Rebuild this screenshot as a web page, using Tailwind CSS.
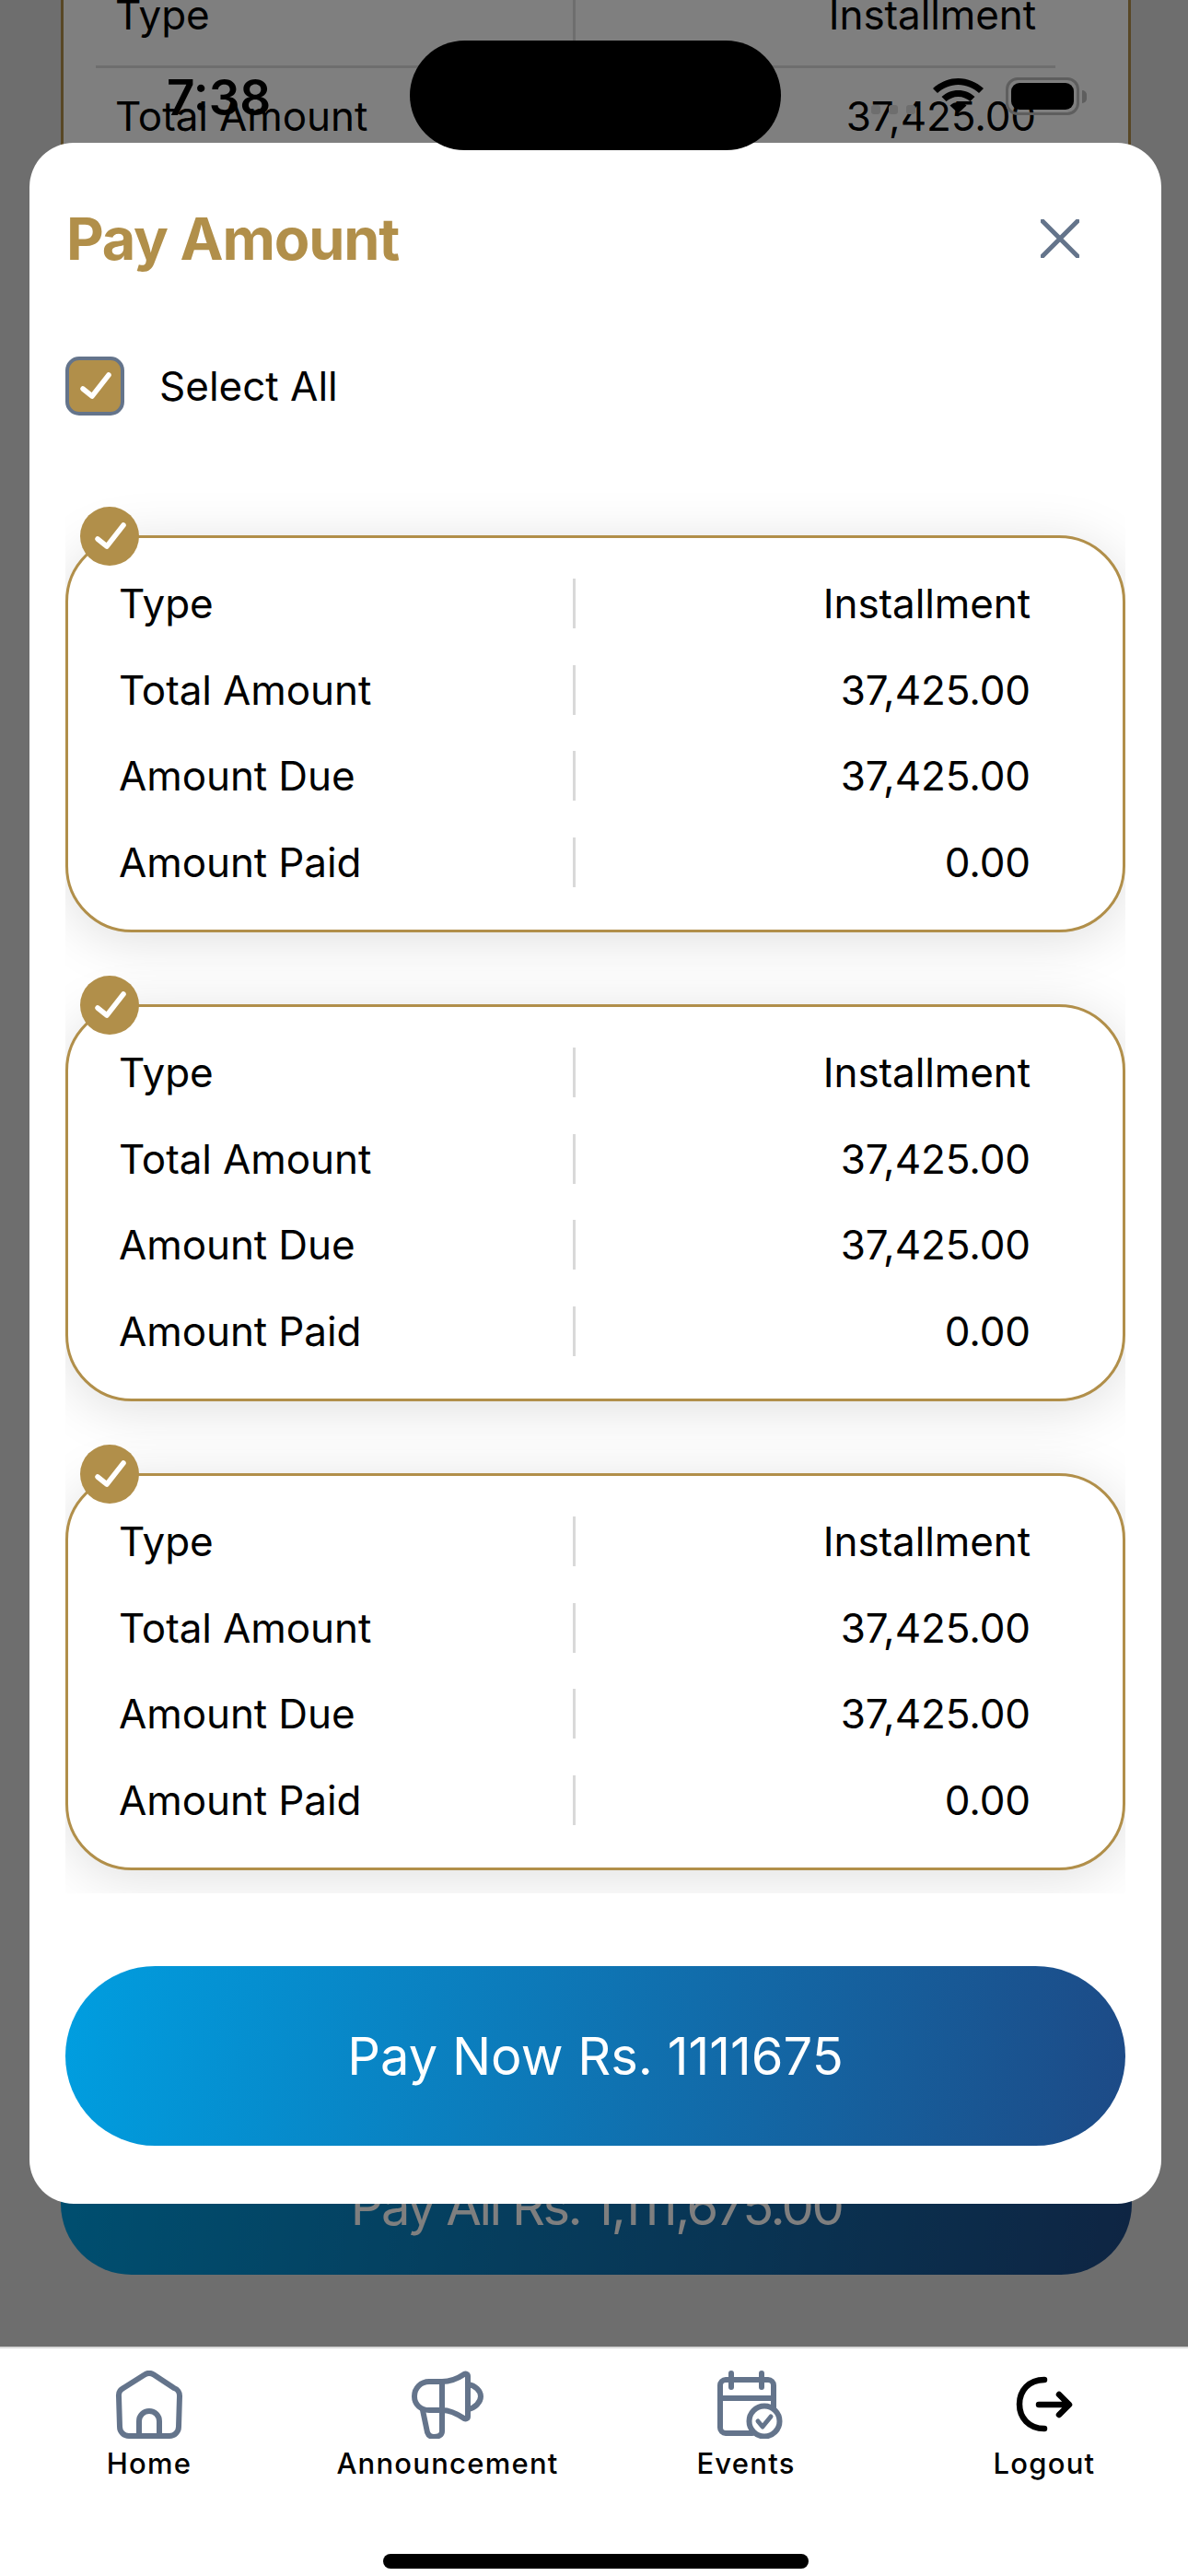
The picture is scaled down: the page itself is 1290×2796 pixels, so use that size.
<!DOCTYPE html>
<html lang="en">
<head>
    <meta charset="UTF-8">
    <meta name="viewport" content="width=device-width, initial-scale=1.0">
    <title>Pay Amount</title>
    <script src="https://cdn.jsdelivr.net/npm/@tailwindcss/browser@4"></script>
</head>
<body class="bg-white font-['Inter',sans-serif] text-black">
<div class="relative w-[1290px] h-[2796px] overflow-hidden flex flex-col">

    <!-- Page behind the modal -->
    <main class="relative h-[2547px] bg-[#dcdcdc] overflow-hidden">
        <div class="ml-[66px] mr-[62px] -mt-[20px] h-[300px] bg-white border-x-[3px] border-[#b18f4a] pl-[56px] pr-[100px] pt-[6px] text-[44px] leading-[60px] tracking-[-0.1px]">
            <div class="grid grid-cols-[497px_1fr] h-[88px] border-b-[3px] border-[#dcdcdc] -mx-[21px] px-[21px]">
                <span>Type</span><span class="border-l-[3px] border-[#dcdcdc] text-right">Installment</span>
            </div>
            <div class="flex justify-between pt-[22px]">
                <span>Total Amount</span><span>37,425.00</span>
            </div>
        </div>
        <div class="mt-[2035px] ml-[66px] mr-[61px] h-[154px] pt-[6px] rounded-full bg-[linear-gradient(97deg,#009ee0,#1d4a86)] flex items-center justify-center text-white text-[56px] tracking-[-2.5px]">Pay All Rs. 1,111,675.00</div>

        <!-- Overlay + modal -->
        <div class="absolute inset-0 bg-black/50 pt-[155px] pl-[32px]">
            <div class="w-[1229px] h-[2237px] bg-white rounded-[48px] px-[39px] pt-[68px] flex flex-col">
                <div class="flex items-center justify-between pl-[1px] pr-[50px]">
                    <h1 class="text-[63px] leading-[72px] font-bold tracking-[-1.2px] text-[#b18f4a]">Pay Amount</h1>
                    <svg class="w-[42px] h-[42px] text-[#64748b]" viewBox="0 0 42 42" fill="none" stroke="currentColor" stroke-width="5" stroke-linecap="round"><path d="M2 2 40 40M40 2 2 40"/></svg>
                </div>
                <div class="flex items-center mt-[92px] gap-[38px]">
                    <div class="w-[64px] h-[64px] rounded-[15px] border-[4px] border-[#64748b] bg-[#b18f4a] flex items-center justify-center">
                        <svg class="w-[36px] h-[30px]" viewBox="0 0 36 30" fill="none" stroke="#fff" stroke-width="5.500" stroke-linecap="round" stroke-linejoin="round"><path d="M5 18 15 26 33 3"/></svg>
                    </div>
                    <span class="text-[44px] leading-[60px]">Select All</span>
                </div>

                <div class="mt-[58px] h-[1546px] overflow-hidden pt-[72px] flex flex-col gap-[78px]">
                    <div class="relative shrink-0 h-[431px] rounded-[72px] border-[3px] border-[#b18f4a] bg-white shadow-[0_8px_60px_rgba(0,0,0,0.13)] pl-[55px] pr-[100px] pt-[44px] text-[44px] leading-[54px] tracking-[-0.1px]">
                        <span class="absolute left-[13px] -top-[34px] w-[64px] h-[64px] rounded-full bg-[#b18f4a] flex items-center justify-center">
                            <svg class="w-[36px] h-[30px]" viewBox="0 0 36 30" fill="none" stroke="#fff" stroke-width="5.500" stroke-linecap="round" stroke-linejoin="round"><path d="M5 18 15 26 33 3"/></svg>
                        </span>
                        <div class="grid grid-cols-[493px_1fr] gap-y-[39.5px]">
                            <span>Type</span><span class="border-l-[3px] border-[#d9d9d9] text-right">Installment</span>
                            <span>Total Amount</span><span class="border-l-[3px] border-[#d9d9d9] text-right">37,425.00</span>
                            <span>Amount Due</span><span class="border-l-[3px] border-[#d9d9d9] text-right">37,425.00</span>
                            <span>Amount Paid</span><span class="border-l-[3px] border-[#d9d9d9] text-right">0.00</span>
                        </div>
                    </div>
                    <div class="relative shrink-0 h-[431px] rounded-[72px] border-[3px] border-[#b18f4a] bg-white shadow-[0_8px_60px_rgba(0,0,0,0.13)] pl-[55px] pr-[100px] pt-[44px] text-[44px] leading-[54px] tracking-[-0.1px]">
                        <span class="absolute left-[13px] -top-[34px] w-[64px] h-[64px] rounded-full bg-[#b18f4a] flex items-center justify-center">
                            <svg class="w-[36px] h-[30px]" viewBox="0 0 36 30" fill="none" stroke="#fff" stroke-width="5.500" stroke-linecap="round" stroke-linejoin="round"><path d="M5 18 15 26 33 3"/></svg>
                        </span>
                        <div class="grid grid-cols-[493px_1fr] gap-y-[39.5px]">
                            <span>Type</span><span class="border-l-[3px] border-[#d9d9d9] text-right">Installment</span>
                            <span>Total Amount</span><span class="border-l-[3px] border-[#d9d9d9] text-right">37,425.00</span>
                            <span>Amount Due</span><span class="border-l-[3px] border-[#d9d9d9] text-right">37,425.00</span>
                            <span>Amount Paid</span><span class="border-l-[3px] border-[#d9d9d9] text-right">0.00</span>
                        </div>
                    </div>
                    <div class="relative shrink-0 h-[431px] rounded-[72px] border-[3px] border-[#b18f4a] bg-white shadow-[0_8px_60px_rgba(0,0,0,0.13)] pl-[55px] pr-[100px] pt-[44px] text-[44px] leading-[54px] tracking-[-0.1px]">
                        <span class="absolute left-[13px] -top-[34px] w-[64px] h-[64px] rounded-full bg-[#b18f4a] flex items-center justify-center">
                            <svg class="w-[36px] h-[30px]" viewBox="0 0 36 30" fill="none" stroke="#fff" stroke-width="5.500" stroke-linecap="round" stroke-linejoin="round"><path d="M5 18 15 26 33 3"/></svg>
                        </span>
                        <div class="grid grid-cols-[493px_1fr] gap-y-[39.5px]">
                            <span>Type</span><span class="border-l-[3px] border-[#d9d9d9] text-right">Installment</span>
                            <span>Total Amount</span><span class="border-l-[3px] border-[#d9d9d9] text-right">37,425.00</span>
                            <span>Amount Due</span><span class="border-l-[3px] border-[#d9d9d9] text-right">37,425.00</span>
                            <span>Amount Paid</span><span class="border-l-[3px] border-[#d9d9d9] text-right">0.00</span>
                        </div>
                    </div>
                </div>

                <button class="mt-[79px] h-[195px] rounded-full bg-[linear-gradient(97deg,#009ee0,#1d4a86)] text-white text-[56px]">Pay Now Rs. 1111675</button>
            </div>
        </div>
    </main>

    <!-- Status bar -->
    <div class="absolute left-[181px] top-[76px] text-[53px] leading-[60px] font-semibold">7:38</div>
    <div class="absolute left-[445px] top-[44px] w-[403px] h-[119px] rounded-[60px] bg-black"></div>
    <div class="absolute left-[946px] top-[114px] flex gap-[9px]">
        <span class="w-[10px] h-[10px] rounded-[3px] bg-[#6e6e6e]"></span>
        <span class="w-[10px] h-[10px] rounded-[3px] bg-[#6e6e6e]"></span>
        <span class="w-[10px] h-[10px] rounded-[3px] bg-[#6e6e6e]"></span>
    </div>
    <svg class="absolute left-[1013px] top-[85px] w-[55px] h-[38px]" viewBox="0 0 55 38" fill="#000"><path d="M27.5 0C17 0 8 4 0 11l5 5c6-5.500 14-9 22.500-9S44 10.500 50 16l5-5C47 4 38 0 27.500 0Z"/><path d="M27.500 13c-7 0-13 2.500-18 7l5 5c3.500-3 8-5 13-5s9.500 2 13 5l5-5c-5-4.500-11-7-18-7Z"/><path d="M27.500 26c-3.500 0-6.500 1-9 3.500L27.500 38l9-8.500c-2.500-2.500-5.500-3.500-9-3.500Z"/></svg>
    <div class="absolute left-[1092px] top-[84px] flex items-center">
        <div class="w-[80px] h-[41px] rounded-[13px] border-[3px] border-[#5e5e5e] p-[3px]"><div class="w-full h-full rounded-[9px] bg-black"></div></div>
        <div class="w-[5px] h-[14px] ml-[3px] rounded-r-full bg-[#5e5e5e]"></div>
    </div>

    <!-- Bottom tabs -->
    <nav class="relative h-[249px] bg-white border-t-[2px] border-[#d9d9d9]">
        <div class="grid grid-cols-4 w-[1296px] pt-[24px]">
            <a class="flex flex-col items-center">
                <svg class="w-[74px] h-[74px]" viewBox="0 0 74 74" fill="none" stroke="#64748b" stroke-width="6" stroke-linecap="round" stroke-linejoin="round"><path d="M9 19 32 4.500a9 9 0 0 1 10 0L64 19a9 9 0 0 1 6 9l-1 33a10 10 0 0 1-10 10H15A10 10 0 0 1 5 61L4 28a9 9 0 0 1 5-9Z"/><path d="M26 69V55a11 11 0 0 1 22 0v14"/></svg>
                <span class="mt-[7px] text-[31px] leading-[40px] font-medium tracking-[0.04em]">Home</span>
            </a>
            <a class="flex flex-col items-center">
                <svg class="w-[78px] h-[74px]" viewBox="0 0 78 74" fill="none" stroke="#64748b" stroke-width="6" stroke-linecap="round" stroke-linejoin="round"><path d="M33 12H19C10 12 3 19 3 28s7 15 16 15h14c10 0 18 5 24 9 2 1 4 0 4-2V6c0-2-2-3-4-2-6 4-14 8-24 8Z"/><path d="M33 12v54c0 4-4 6-9 6-4 0-6-2-7-5l-5-24"/><path d="M61 15c8 1 14 7 14 13s-6 13-14 14"/></svg>
                <span class="mt-[7px] text-[31px] leading-[40px] font-medium tracking-[0.04em]">Announcement</span>
            </a>
            <a class="flex flex-col items-center">
                <svg class="w-[74px] h-[74px] ml-[8px]" viewBox="0 0 74 74" fill="none" stroke="#64748b" stroke-linecap="round" stroke-linejoin="round"><path stroke-width="6" d="M40 68H11a6 6 0 0 1-6-6V16a6 6 0 0 1 6-6h46a6 6 0 0 1 6 6v24"/><path stroke-width="6" d="M5 30h58"/><path stroke-width="6" d="M17 3v15M50 3v15"/><circle cx="53" cy="55" r="16.500" fill="#fff" stroke-width="6"/><path stroke-width="5" d="M46 55l5 6 9-11"/></svg>
                <span class="mt-[7px] text-[31px] leading-[40px] font-medium tracking-[0.04em]">Events</span>
            </a>
            <a class="flex flex-col items-center">
                <svg class="w-[74px] h-[74px]" viewBox="0 0 74 74" fill="none" stroke="#000" stroke-width="6.500" stroke-linecap="round" stroke-linejoin="round"><path d="M37 10C20 10 10 22 10 36.500S20 63 37 63"/><path d="M31 37h32M53 26l11 11-11 11"/></svg>
                <span class="mt-[7px] text-[31px] leading-[40px] font-medium tracking-[0.04em]">Logout</span>
            </a>
        </div>
        <div class="absolute left-[416px] top-[223px] w-[462px] h-[16px] rounded-full bg-black"></div>
    </nav>
</div>
</body>
</html>
